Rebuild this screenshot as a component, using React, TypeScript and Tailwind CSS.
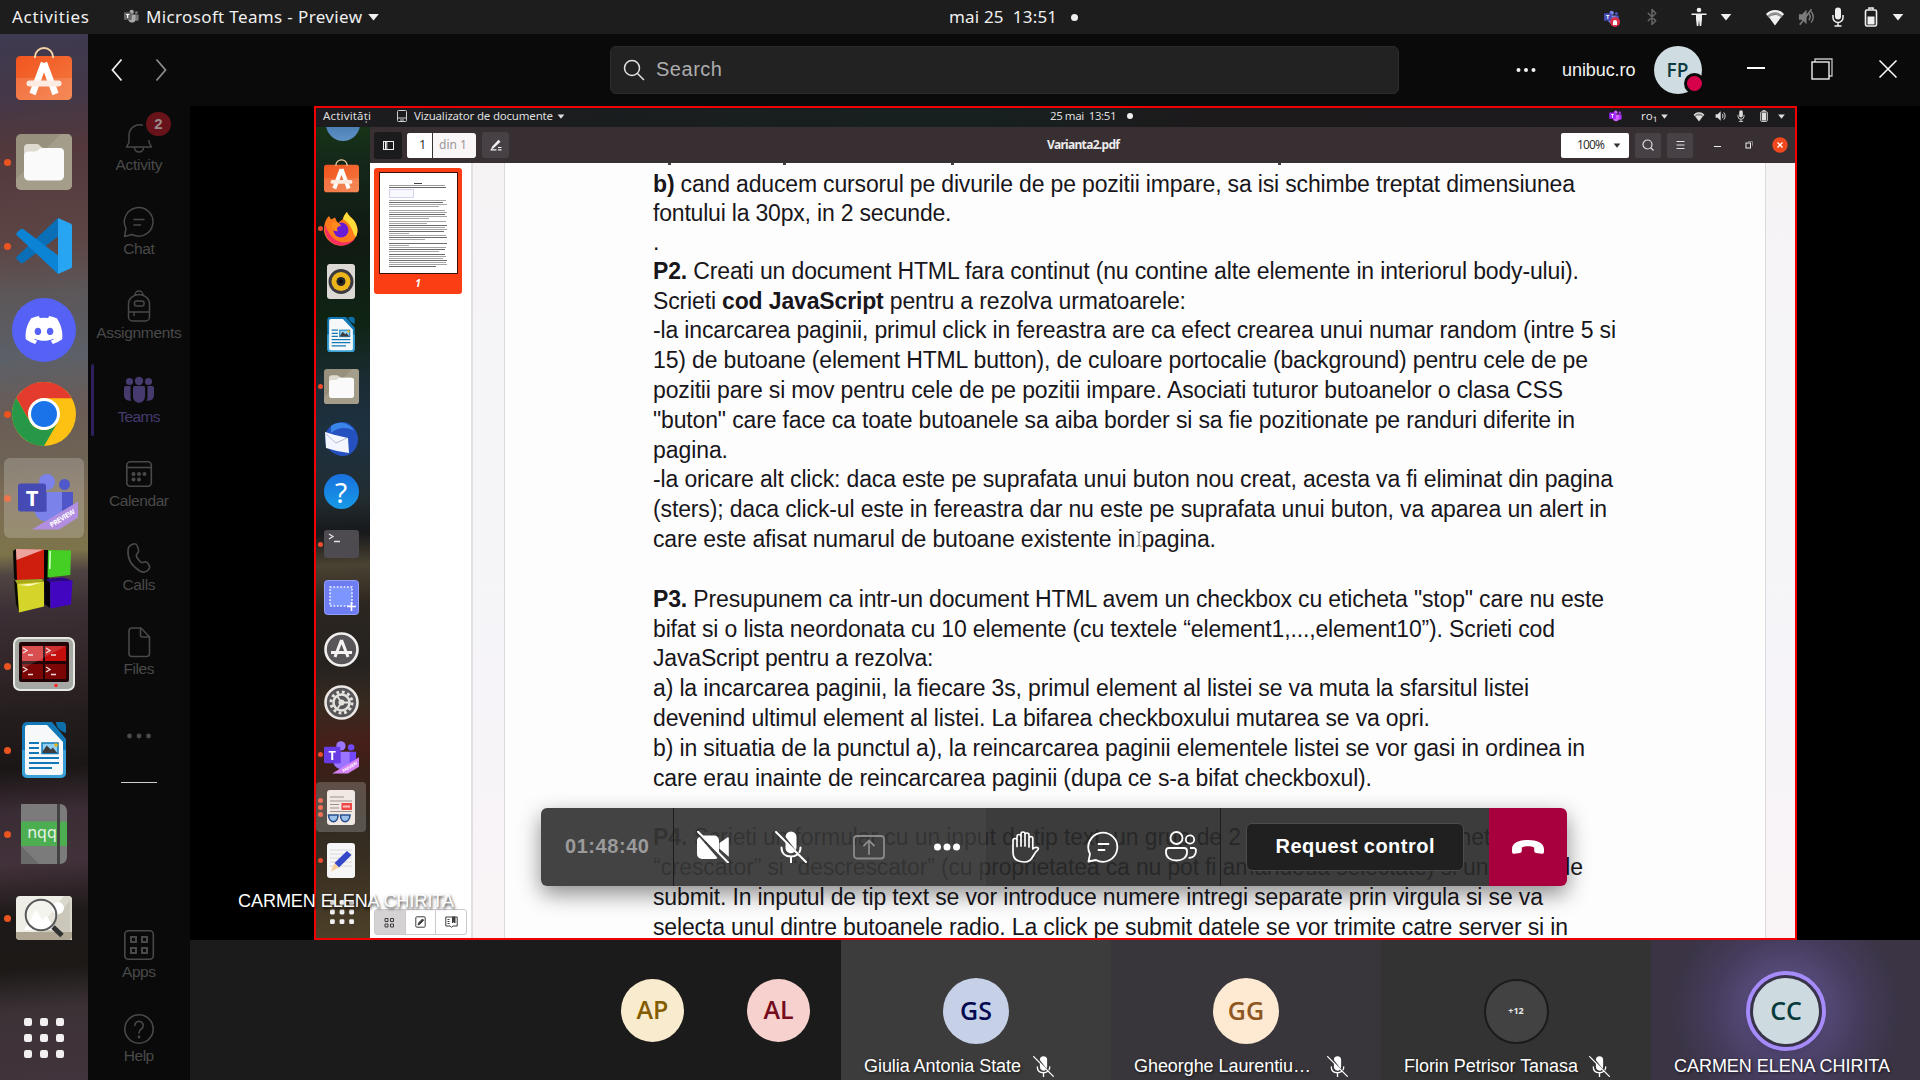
import { useLayoutEffect, useRef, useState } from "react";
import type { ReactNode } from "react";
import { FaDiscord } from "react-icons/fa6";
import { Bluetooth } from "lucide-react";

/* Text spread with letter spacing so that it fills exactly `w` pixels. */
function Fit({ w, className = "", children }: { w: number; className?: string; children: ReactNode }) {
  const ref = useRef<HTMLSpanElement>(null);
  const [ls, setLs] = useState(0);
  useLayoutEffect(() => {
    const el = ref.current;
    if (!el) return;
    const natural = el.getBoundingClientRect().width;
    const n = (el.textContent || "").length;
    setLs((w - natural) / Math.max(1, n - 1));
  }, [w]);
  return (
    <span className={`block shrink-0 whitespace-pre ${className}`} style={{ width: w }}>
      <span ref={ref} className="inline-block" style={{ letterSpacing: ls }}>
        {children}
      </span>
    </span>
  );
}

const Caret = ({ className = "" }: { className?: string }) => (
  <svg viewBox="0 0 14 9" className={`shrink-0 ${className}`} fill="currentColor">
    <path d="M1 1h12L7 8.5z" />
  </svg>
);

/* ---------- tray icons ---------- */
const Wifi = ({ className = "" }: { className?: string }) => (
  <svg viewBox="0 0 20 18" className={`shrink-0 ${className}`} fill="currentColor">
    <path d="M10 17.500 4 9.300C7.300 6.300 12.700 6.300 16 9.300z" />
    <path d="M1.800 6.800C6.500 1.800 13.500 1.800 18.200 6.800" fill="none" stroke="currentColor" strokeWidth="2.200" />
    <path d="M10 17.500 1.200 6.500C6 1 14 1 18.800 6.500L16 10C13 5.800 7 5.800 4 10z" opacity=".55" />
  </svg>
);
const MicSolid = ({ className = "" }: { className?: string }) => (
  <svg viewBox="0 0 20 20" className={`shrink-0 ${className}`} fill="none" stroke="currentColor" strokeWidth="1.500">
    <rect x="7" y="0.500" width="6" height="12" rx="3" fill="currentColor" stroke="none" />
    <path d="M5 8v2.500a5 5 0 0 0 10 0V8M10 15.500V19M6.500 19h7" />
  </svg>
);
const Battery = ({ className = "", level = 8 }: { className?: string; level?: number }) => (
  <svg viewBox="0 0 20 20" className={`shrink-0 ${className}`} fill="none" stroke="currentColor" strokeWidth="1.600">
    <path d="M8 2.500V1h4v1.500" />
    <rect x="4.500" y="3" width="11" height="16" rx="1.500" />
    <rect x="6.500" y={17.500 - level} width="7" height={level} fill="currentColor" stroke="none" />
  </svg>
);
const Volume = ({ className = "", muted = false }: { className?: string; muted?: boolean }) => (
  <svg viewBox="0 0 20 20" className={`shrink-0 ${className}`} fill="none" stroke="currentColor" strokeWidth="1.600">
    <path d="M1 7h3.500L9.500 2v16L4.500 13H1z" fill="currentColor" stroke="none" />
    <path d="M12 6.500c1.800 2 1.800 5 0 7M14.500 4c3.200 3.500 3.200 8.500 0 12" />
    {muted && <path d="M2 18.500 15 1.500" strokeWidth="1.800" />}
  </svg>
);

function TeamsLogo({ className = "", ribbon = false }: { className?: string; ribbon?: boolean }) {
  return (
    <svg viewBox="0 0 60 58" className={`shrink-0 ${className}`}>
      <circle cx="46.500" cy="12.500" r="5.500" fill="#5059c9" />
      <path d="M43 20h12v20a9 9 0 0 1-12 2z" fill="#4f57c8" />
      <circle cx="29" cy="10" r="8" fill="#7b83eb" />
      <path d="M16 20h28v17c0 17-27 17-28 0z" fill="#7b83eb" />
      <path d="M16 20h13v20H17z" fill="#5a61c8" />
      <rect x="0" y="11.500" width="28" height="28" rx="2.500" fill="#464ab4" />
      <text x="14" y="33.500" textAnchor="middle" fontFamily="Open Sans" fontWeight="700" fontSize="22" fill="#fff">T</text>
      {ribbon && (
        <g>
          <path d="M14 57.500 60 29.500V45.500L41 57.500z" fill="#b18ee0" />
          <text transform="translate(33.500 55.500) rotate(-31)" fontFamily="Open Sans" fontWeight="700" fontSize="7" textLength="28" fill="#fff">PREVIEW</text>
        </g>
      )}
    </svg>
  );
}

/* ---------- dock icons ---------- */
const SoftwareIcon = ({ className = "" }: { className?: string }) => (
  <svg viewBox="0 0 56 54" className={`shrink-0 ${className}`}>
    <defs>
      <linearGradient id="sw" x1="0" y1="0" x2="1" y2="1">
        <stop offset="0" stopColor="#f2551f" />
        <stop offset="1" stopColor="#f37a40" />
      </linearGradient>
    </defs>
    <rect x="0" y="9" width="56" height="44" rx="4.500" fill="url(#sw)" />
    <path d="M0 31h56v17.500a4.500 4.500 0 0 1-4.500 4.500h-47A4.500 4.500 0 0 1 0 48.500z" fill="#fff" opacity=".12" />
    <path d="M28 16 16.500 47M28 16l11.500 31" stroke="#fff" strokeWidth="6.500" />
    <path d="M13.500 36.500h29" stroke="#fdeae0" strokeWidth="6" strokeLinecap="round" />
    <path d="M19 11V10a9 9 0 0 1 18 0v1" fill="none" stroke="#f6d3a6" strokeWidth="2" />
  </svg>
);
const FilesIcon = ({ className = "" }: { className?: string }) => (
  <svg viewBox="0 0 56 56" className={`shrink-0 ${className}`}>
    <rect width="56" height="56" rx="5" fill="#96907c" />
    <path d="M0 45 45 0h6a5 5 0 0 1 5 5v46a5 5 0 0 1-5 5H5a5 5 0 0 1-5-5z" fill="#a39d8a" />
    <path d="M8 14a4 4 0 0 1 4-4h9c3 0 3.500 4 7 4h16a4 4 0 0 1 4 4v8H8z" fill="#dedad0" />
    <path d="M8 22a4.500 4.500 0 0 1 4.500-4.500H19c3 0 4-3.500 7-3.500h17.500A4.500 4.500 0 0 1 48 18.500V42a4.500 4.500 0 0 1-4.500 4.500h-31A4.500 4.500 0 0 1 8 42z" fill="#fafafa" />
  </svg>
);
const CodeIcon = () => (
  <svg viewBox="0 0 56 56" className="h-14 w-14">
    <path d="M42 0 1 38.500c-1 1-1 2 0 3l3.500 3.200c1 .8 2 .8 3 0L44 17z" fill="#0b6fb8" />
    <path d="M42 56 1 17.500c-1-1-1-2 0-3l3.500-3.200c1-.8 2-.8 3 0L44 39z" fill="#0c84d6" />
    <path d="M42 0 54.500 5.500c1 .5 1.500 1.300 1.500 2.300v40.400c0 1-.5 1.800-1.500 2.300L42 56z" fill="#27a4f2" />
  </svg>
);
const ChromeIcon = () => (
  <svg viewBox="0 0 64 64" className="h-16 w-16">
    <circle cx="32" cy="32" r="32" fill="#fdc113" />
    <path d="M4.300 16A32 32 0 0 1 59.700 16L60 16.300H32a16 16 0 0 0-13.900 23.700z" fill="#e33b2e" />
    <path d="M4.300 16A32 32 0 0 0 32 64l13.900-24A16 16 0 0 1 18.100 40z" fill="#279847" />
    <circle cx="32" cy="32" r="16" fill="#fff" />
    <circle cx="32" cy="32" r="13" fill="#1a73e8" />
  </svg>
);
const BlocksIcon = () => (
  <svg viewBox="0 0 60 66" className="-ml-0.5 h-[66px] w-[60px]">
    <path d="M0 2 3 0 6 31 3 32 1 29z" fill="#0a0606" />
    <path d="M31 1h5v30l-5 2z" fill="#050505" />
    <path d="M3 0 31 .5V29.500L4 31.500z" fill="#cf1d0e" />
    <path d="M3 0 31 .5 3.500 11z" fill="#fff" opacity=".6" />
    <path d="M35 1 58 1.500 57.300 26 34.500 28.500z" fill="#45cf25" />
    <path d="M36.500 2H38l-.5 18H36z" fill="#d8ffd0" />
    <path d="M1 31 5 34 6 63 3 55z" fill="#0a0a00" />
    <path d="M4 34 31 32.500V57.500L6 63.500z" fill="#d4d42a" />
    <path d="M2 31 29 30 31 32.500 4 35z" fill="#a8a81c" />
    <path d="M5 36 29 33.500 16 37z" fill="#fbfbc8" />
    <path d="M31 30 37 33V59l-5.500-4z" fill="#04000c" />
    <path d="M33 30 50 28.500 59.500 31.500 37 33z" fill="#2d0688" />
    <path d="M37 33 59.500 31.500 58 55.500 37.500 59.500z" fill="#4206c0" />
  </svg>
);
const TerminatorIcon = () => (
  <svg viewBox="0 0 62 54" className="-mt-1 h-[54px] w-[62px]">
    <rect x="1" y="1" width="60" height="52" rx="6" fill="#a5a8a3" stroke="#e8e8e4" strokeWidth="2" />
    <rect x="6" y="5" width="50" height="40" rx="2" fill="#220406" />
    {[0, 1].map((r) =>
      [0, 1].map((c) => (
        <g key={`${r}${c}`}>
          <rect x={9 + c * 23} y={9 + r * 18} width="21" height="15" fill={r ? "#7a0505" : c ? "#c40d0d" : "#d33232"} />
          <path d={r ? `M${10 + c * 23} 30l4 2.500-4 2.500M${15 + c * 23} 37.500h5` : `M${10 + c * 23} 11l4 2.500-4 2.500M${15 + c * 23} 18h5`} stroke="#f0dcdc" strokeWidth="1.300" fill="none" />
        </g>
      )),
    )}
    <path d="M9 9h44L9 32z" fill="#fff" opacity=".14" />
    <circle cx="43" cy="48.500" r="1.700" fill="#f22" />
  </svg>
);
const WriterIcon = ({ className = "" }: { className?: string }) => (
  <svg viewBox="0 0 44 56" className={`shrink-0 ${className}`}>
    <path d="M0 5a5 5 0 0 1 5-5h25l14 17v34a5 5 0 0 1-5 5H5a5 5 0 0 1-5-5z" fill="#1279b6" />
    <path d="M0 28h44v23a5 5 0 0 1-5 5H5a5 5 0 0 1-5-5z" fill="#3aa0d6" />
    <path d="M3 6a3 3 0 0 1 3-3h19l16 17v30a3 3 0 0 1-3 3H6a3 3 0 0 1-3-3z" fill="#f7f8f9" />
    <path d="M34 0h6a4 4 0 0 1 4 4v7C38 9 34 5 34 0z" fill="#0d6ea8" />
    <path d="M7 21h10M7 26h10M7 31h10M7 36h30M7 41h30M7 46h23" stroke="#1178b5" strokeWidth="2" />
    <rect x="20" y="21" width="16" height="10.500" fill="#8fd0f2" stroke="#1178b5" strokeWidth="1.500" />
    <path d="M20.800 31v-2l4-5.500 4 4 2-2 4.500 5.500z" fill="#3d3d3d" />
    <circle cx="34" cy="23" r="1.800" fill="#f4b400" />
  </svg>
);
const NqqIcon = () => (
  <svg viewBox="0 0 46 60" className="h-[60px] w-[46px]">
    <path d="M0 1a1 1 0 0 1 1-1h38a7 7 0 0 1 7 7v46a7 7 0 0 1-7 7H1a1 1 0 0 1-1-1z" fill="#7b7b7b" />
    <path d="M0 42 18 60H0z" fill="#6a6a6a" />
    <rect y="17.500" width="46" height="24.500" fill="#4cae50" />
    <rect x="36" width="3" height="60" fill="#424242" />
    <text x="21" y="34" textAnchor="middle" fontFamily="Noto Sans" fontSize="16" fill="#e8f4e8">nqq</text>
  </svg>
);
const ViewerIcon = () => (
  <svg viewBox="0 0 56 44" className="h-[44px] w-14">
    <rect width="56" height="44" rx="4" fill="#efeee6" />
    <path d="M14 44 48 0h4a4 4 0 0 1 4 4v40z" fill="#dad8cd" />
    <path d="M30 36 54 4v32z" fill="#c5c1b2" opacity=".7" />
    <path d="M0 36h56v4a4 4 0 0 1-4 4H4a4 4 0 0 1-4-4z" fill="#aea593" />
    <circle cx="42" cy="12" r="6" fill="#fff" />
    <path d="M8 34 20 14l6 10 5-4 8 14z" fill="#fff" />
    <circle cx="25" cy="19" r="15.300" fill="#fff" fillOpacity=".35" stroke="#56585a" strokeWidth="2" />
    <path d="m37 31 9 8.500" stroke="#2f3133" strokeWidth="5" />
  </svg>
);
const GridDots = ({ className = "" }: { className?: string }) => (
  <svg viewBox="0 0 40 40" className={`shrink-0 ${className}`} fill="#f2f0f0">
    {[0, 16, 32].map((y) => [0, 16, 32].map((x) => <rect key={`${x}-${y}`} x={x} y={y} width="8" height="8" rx="2.200" />))}
  </svg>
);

const dock: { icon: ReactNode; dot?: boolean; active?: boolean }[] = [
  { icon: <SoftwareIcon className="-mt-[9px] h-[54px] w-14" /> },
  { icon: <FilesIcon className="h-14 w-14" />, dot: true },
  { icon: <CodeIcon />, dot: true },
  {
    icon: (
      <div className="flex h-16 w-16 items-center justify-center rounded-full bg-[#5662f5]">
        <FaDiscord className="h-10 w-10 text-white" />
      </div>
    ),
  },
  { icon: <ChromeIcon />, dot: true },
  { icon: <TeamsLogo ribbon className="mt-[5px] ml-[7px] h-[58px] w-[60px]" />, dot: true, active: true },
  { icon: <BlocksIcon /> },
  { icon: <TerminatorIcon />, dot: true },
  { icon: <WriterIcon className="h-14 w-11" />, dot: true },
  { icon: <NqqIcon />, dot: true },
  { icon: <ViewerIcon />, dot: true },
];

function Dock() {
  return (
    <nav className="flex w-[88px] shrink-0 flex-col overflow-hidden bg-[linear-gradient(176deg,#3e3a50_0%,#443848_6%,#52383c_11%,#5e4544_20%,#5c5759_25%,#5c6068_31%,#6a5c56_36%,#6e6455_41%,#7c6c56_44%,#7d744a_49.5%,#4f4442_51.500%,#3c2f35_55%,#322629_60%,#241d1e_65%,#1b1616_70%,#3a2c34_74%,#42313a_79%,#1d1918_84%,#1c1917_89%,#3c3236_93%,#41343c_100%)]">
      <div className="flex flex-col pt-[2px]">
        {dock.map((d, i) => (
          <div key={i} className="flex h-[84px] items-center">
            <span className={`ml-1 h-[7px] w-[7px] shrink-0 rounded-full ${d.dot ? "bg-[#e95420]" : ""}`} />
            <div className={`-ml-[7px] flex h-20 w-20 items-center justify-center rounded-md ${d.active ? "bg-white/20" : ""}`}>{d.icon}</div>
          </div>
        ))}
      </div>
      <GridDots className="mt-[58px] ml-6 h-10 w-10" />
    </nav>
  );
}

/* ---------- Teams rail ---------- */
const rs = "h-[34px] w-[34px] shrink-0";
const rail: { label: string; w: number; active?: boolean; icon: ReactNode }[] = [
  {
    label: "Activity", w: 47,
    icon: (
      <svg viewBox="0 0 34 34" className={rs} fill="none" stroke="currentColor" strokeWidth="1.500" strokeLinejoin="round">
        <path d="M21 4.300A10.500 10.500 0 0 0 7 14v7.500L4.500 26h25L27 21.500V19" />
        <path d="M12.500 26.500a4.500 4.500 0 0 0 9 0" />
      </svg>
    ),
  },
  {
    label: "Chat", w: 31.5,
    icon: (
      <svg viewBox="0 0 34 34" className={rs} fill="none" stroke="currentColor" strokeWidth="1.500" strokeLinejoin="round" strokeLinecap="round">
        <path d="M2.500 31.500 4 23.500a14.300 14.300 0 1 1 6 6zM12 14.500h10M12 20h6.500" />
      </svg>
    ),
  },
  {
    label: "Assignments", w: 85.5,
    icon: (
      <svg viewBox="0 0 34 34" className={rs} fill="none" stroke="currentColor" strokeWidth="1.500">
        <path d="M13 6a4 4 0 0 1 8 0M6.500 15a10.500 9.500 0 0 1 21 0v13a4 4 0 0 1-4 4h-13a4 4 0 0 1-4-4z" />
        <rect x="12.500" y="12" width="9.500" height="5" rx="2" />
        <path d="M6.500 23h21M12 23v4" />
      </svg>
    ),
  },
  {
    label: "Teams", w: 43, active: true,
    icon: (
      <svg viewBox="0 0 34 34" className={rs} fill="currentColor">
        <circle cx="17" cy="8" r="4.200" />
        <circle cx="7.500" cy="8.500" r="3.600" />
        <circle cx="26.500" cy="8.500" r="3.600" />
        <path d="M11 14.500a1.500 1.500 0 0 1 1.500-1.500h9a1.500 1.500 0 0 1 1.500 1.500V23c0 9-12 9-12 0zM4 13h4.500v11.500c0 1.500.5 2 1 3C5 28.500 2 26 2 22v-7a2 2 0 0 1 2-2zM30 13h-4.500v11.500c0 1.500-.5 2-1 3C29 28.500 32 26 32 22v-7a2 2 0 0 0-2-2z" />
      </svg>
    ),
  },
  {
    label: "Calendar", w: 60,
    icon: (
      <svg viewBox="0 0 34 34" className={rs} fill="none" stroke="currentColor" strokeWidth="1.600">
        <rect x="4.800" y="4.800" width="24.500" height="24.500" rx="3.500" />
        <path d="M5 10.500h24" />
        <g fill="currentColor" stroke="none">
          <circle cx="11.500" cy="17" r="2" /><circle cx="17" cy="17" r="2" /><circle cx="22.500" cy="17" r="2" />
          <circle cx="11.500" cy="22.500" r="2" /><circle cx="17" cy="22.500" r="2" />
        </g>
      </svg>
    ),
  },
  {
    label: "Calls", w: 33,
    icon: (
      <svg viewBox="0 0 34 34" className={rs} fill="none" stroke="currentColor" strokeWidth="1.600" strokeLinejoin="round">
        <path d="M9 4 11.500 3c2-.8 3 0 4 2.500l1 3c.7 2 0 3-1.500 4.500-1 1-1 1.800 0 3.500s2.500 3.800 4 4.800c1 .6 2 .3 3.500-.3 1.500-.6 2.500 0 3.500 1.500l1.200 2c1 1.700.6 2.800-.8 4.200-2 2.300-5 3.200-8.500 1.300C9.500 25 5.500 18 6 9.500 6.200 6.500 7 4.900 9 4z" />
      </svg>
    ),
  },
  {
    label: "Files", w: 31,
    icon: (
      <svg viewBox="0 0 34 34" className={rs} fill="none" stroke="currentColor" strokeWidth="1.600" strokeLinejoin="round">
        <path d="M10 3h9l8.500 9v16.500a3 3 0 0 1-3 3H10a3 3 0 0 1-3-3V6a3 3 0 0 1 3-3z" />
        <path d="M18.500 3v7a2 2 0 0 0 2 2h7" />
      </svg>
    ),
  },
];

function RailItem({ label, w, active, icon, badge }: { label: string; w: number; active?: boolean; icon: ReactNode; badge?: boolean }) {
  return (
    <div className={`relative flex h-[84px] w-full shrink-0 flex-col items-center pt-[9px] ${active ? "text-[#463a6e]" : "text-[#494949]"}`}>
      {active && <span className="absolute top-0 left-[3px] h-[72px] w-[3px] rounded-sm bg-[#2f1f5c]" />}
      {icon}
      <Fit w={w} className="text-[15.500px] leading-[20px]">{label}</Fit>
      {badge && (
        <span className="absolute top-0 left-[58px] flex h-6 w-[25px] items-center justify-center rounded-full bg-[#681319] text-[15px] font-bold text-[#9a8a8c]">2</span>
      )}
    </div>
  );
}

function Rail() {
  return (
    <aside className="flex w-[102px] shrink-0 flex-col items-center overflow-hidden bg-[#0a0a0a] pt-[6px]">
      {rail.map((r, i) => (
        <RailItem key={r.label} {...r} badge={i === 0} />
      ))}
      <svg viewBox="0 0 24 6" className="mt-[33px] h-[6px] w-6 shrink-0" fill="#4a4a4a">
        <circle cx="2.500" cy="3" r="2.400" /><circle cx="12" cy="3" r="2.400" /><circle cx="21.500" cy="3" r="2.400" />
      </svg>
      <div className="mt-[43px] h-px w-9 shrink-0 bg-[#cfcfcf]" />
      <div className="mt-[136px] flex w-full shrink-0 flex-col">
        <RailItem
          label="Apps" w={34}
          icon={
            <svg viewBox="0 0 34 34" className={rs} fill="none" stroke="currentColor" strokeWidth="1.600">
              <rect x="2.800" y="2.800" width="28.500" height="28.500" rx="3.500" />
              <g strokeWidth="2"><rect x="9" y="9" width="5" height="5" /><rect x="20" y="9" width="5" height="5" /><rect x="9" y="20" width="5" height="5" /><rect x="20" y="20" width="5" height="5" /></g>
            </svg>
          }
        />
        <RailItem
          label="Help" w={30.5}
          icon={
            <svg viewBox="0 0 34 34" className={rs} fill="none" stroke="currentColor" strokeWidth="1.600" strokeLinecap="round">
              <circle cx="17" cy="17" r="14.200" />
              <path d="M12.800 13.500a4.200 4.200 0 1 1 6.500 3.500c-1.700 1.200-2.300 2-2.300 4" />
              <circle cx="17" cy="25" r=".6" fill="currentColor" />
            </svg>
          }
        />
      </div>
    </aside>
  );
}

/* ---------- bars ---------- */
function SystemBar() {
  return (
    <header className="flex h-[34px] shrink-0 items-center bg-[#1d1d1d] font-['Noto_Sans'] text-[17px] text-[#f0f0f0]">
      <Fit w={77} className="ml-3">Activities</Fit>
      <TeamsLogo className="ml-[35px] h-4 w-4 brightness-125 grayscale" />
      <Fit w={216} className="ml-[6px]">Microsoft Teams - Preview</Fit>
      <Caret className="ml-[5px] h-2 w-[13px]" />
      <Fit w={108} className="ml-[569px]">{"mai 25  13:51"}</Fit>
      <span className="ml-[14px] h-[7px] w-[7px] rounded-full bg-[#f0f0f0]" />
      <div className="ml-auto flex items-center pr-[15px]">
        <div className="relative flex h-5 w-5 items-center pt-0.5">
          <TeamsLogo className="ml-0.5 h-4 w-4" />
          <span className="absolute right-0.5 bottom-0 flex h-2.5 w-2.5 items-center justify-center rounded-full bg-[#d33048]">
            <span className="h-[5px] w-1 rounded-t-full bg-white" />
          </span>
        </div>
        <Bluetooth className="ml-5 h-[18px] w-5 text-[#666]" strokeWidth={2} />
        <svg viewBox="0 0 20 20" className="ml-[27px] h-5 w-5" fill="currentColor">
          <circle cx="10" cy="3" r="2.300" />
          <path d="M2.500 6.500h15v1.600H13V12l-.8 7H10.700L10 13l-.7 6H7.800L7 12V8.100H2.500z" />
        </svg>
        <Caret className="ml-[10px] h-2 w-[14px]" />
        <Wifi className="ml-8 h-[18px] w-5" />
        <Volume muted className="ml-3 h-[18px] w-5 text-[#7c7c7c]" />
        <MicSolid className="ml-[11px] h-5 w-5" />
        <Battery className="ml-[13px] h-5 w-5" />
        <Caret className="ml-[10px] h-2 w-[14px]" />
      </div>
    </header>
  );
}

function TitleBar() {
  return (
    <div className="flex h-[72px] shrink-0 items-center bg-[#0a0a0a] text-[#f2f2f2]">
      <svg viewBox="0 0 12 24" className="ml-[23px] h-6 w-3" fill="none" stroke="#eee" strokeWidth="1.800"><path d="M10.500 1.500 1.500 12l9 10.500" /></svg>
      <svg viewBox="0 0 12 24" className="ml-8 h-6 w-3" fill="none" stroke="#8a8a8a" strokeWidth="1.800"><path d="M1.500 1.500l9 10.500-9 10.500" /></svg>
      <div className="ml-[443px] flex h-12 w-[789px] items-center rounded-md border border-[#2d2d2d] bg-[#222]">
        <svg viewBox="0 0 22 22" className="ml-3 h-[22px] w-[22px]" fill="none" stroke="#e2e2e2" strokeWidth="1.500"><circle cx="9" cy="9" r="7.500" /><path d="m14.500 14.500 6.500 6.500" /></svg>
        <Fit w={66} className="ml-[11px] pb-[3px] text-[20px] leading-6 text-[#adadad]">Search</Fit>
      </div>
      <svg viewBox="0 0 20 6" className="ml-[117px] h-[6px] w-5" fill="currentColor"><circle cx="2.500" cy="3" r="2" /><circle cx="10" cy="3" r="2" /><circle cx="17.500" cy="3" r="2" /></svg>
      <Fit w={73.5} className="ml-[26px] text-[18px]">unibuc.ro</Fit>
      <div className="relative ml-[18px] flex h-12 w-12 items-center justify-center rounded-full bg-[#cfdde2] font-['Open_Sans'] text-[19px] font-semibold text-[#0c3a40]">
        FP
        <span className="absolute right-[-3px] bottom-0 h-[21px] w-[21px] rounded-full border-[3px] border-[#0a0a0a] bg-[#d6004a]" />
      </div>
      <span className="mb-1 ml-[45px] h-[1.500px] w-[18px] bg-white" />
      <svg viewBox="0 0 22 22" className="mb-0.5 ml-[46px] h-[22px] w-[22px]" fill="none" stroke="#fff" strokeWidth="1.300"><rect x="1" y="4" width="17" height="17" /><path d="M4 4V1h17v17h-3" opacity=".75" /></svg>
      <svg viewBox="0 0 18 18" className="mb-0.5 ml-[46px] h-[18px] w-[18px]" stroke="#fff" strokeWidth="1.500"><path d="m.5.5 17 17M17.500.5l-17 17" /></svg>
    </div>
  );
}

/* ---------- shared screen ---------- */
const miniDock: { icon: ReactNode; dots?: number; active?: boolean }[] = [
  { icon: <SoftwareIcon className="-mt-px h-[34px] w-[35px]" /> },
  {
    dots: 1,
    icon: (
      <svg viewBox="0 0 36 36" className="h-9 w-9">
        <path d="M1 20C1 12 3 8 6 5l2 3.500 4-2C13 9 14 11 15 12l5-4c1-4 3-6 4-7 1 4 5 5 8 10 2 4 3 6 2.500 10A17 17 0 0 1 1 20z" fill="#ff7a1a" />
        <path d="M20 8c1-4 3-6 4-7 1 4 5 5 8 10 3 6 3 10 1 15-3-2-3-12-13-18z" fill="#ffdc3a" />
        <path d="M2 14a17 17 0 0 0 30 14C20 36 8 30 2 14z" fill="#f5216e" opacity=".85" />
        <circle cx="18" cy="19" r="7.500" fill="#6a1bd6" />
        <path d="M9 12c5-2 8 0 9 3-4 0-5 3-3 5-4 1-8-3-6-8z" fill="#ff8a1a" />
      </svg>
    ),
  },
  {
    icon: (
      <svg viewBox="0 0 28 35" className="h-[35px] w-7">
        <rect width="28" height="35" rx="3" fill="#dcd9d4" />
        <circle cx="14" cy="17.500" r="12.500" fill="#3c3a40" /><circle cx="14" cy="17.500" r="9.500" fill="#edb51a" />
        <circle cx="14" cy="17.500" r="4.500" fill="#26252a" /><circle cx="14" cy="17.500" r="2" fill="#0a0a0a" />
      </svg>
    ),
  },
  { icon: <WriterIcon className="h-[35px] w-7" /> },
  { icon: <FilesIcon className="h-[35px] w-[35px]" />, dots: 1 },
  {
    icon: (
      <svg viewBox="0 0 36 36" className="h-9 w-9">
        <path d="M18 1C26 0 35 8 35 18S28 35 20 35 2 28 2 18 8 3 18 1z" fill="#2450c0" />
        <path d="M8 5C16-1 27 2 31 10 24 5 14 7 8 12z" fill="#3a86e8" />
        <path d="M2 11 12 14l13 3 1 15L14 30 3 27z" fill="#f4f6ff" />
        <path d="m3 13 10 9 11-5" fill="none" stroke="#b4bcd4" />
      </svg>
    ),
  },
  {
    icon: (
      <div className="flex h-[35px] w-[35px] items-center justify-center rounded-full bg-gradient-to-b from-[#1a70de] to-[#189ae6] font-['Noto_Sans'] text-[28px] text-white">?</div>
    ),
  },
  {
    dots: 1,
    icon: (
      <svg viewBox="0 0 35 28" className="h-7 w-[35px]">
        <rect width="35" height="28" rx="3" fill="#4d4a50" /><path d="m5 4 4 2.500L5 9M10 11.500h6" fill="none" stroke="#e4e4e4" strokeWidth="1.300" />
      </svg>
    ),
  },
  {
    icon: (
      <svg viewBox="0 0 35 35" className="h-[35px] w-[35px]">
        <rect x=".5" y=".5" width="34" height="34" rx="3" fill="#6f7df2" stroke="#93a0ff" />
        <rect x="6" y="7" width="22" height="19" fill="#7d95ff" stroke="#eef2ff" strokeWidth="1.600" strokeDasharray="1.700 1.700" />
        <path d="M27.500 22v9M23 26.500h9" stroke="#fff" strokeWidth="1.600" />
      </svg>
    ),
  },
  {
    icon: (
      <svg viewBox="0 0 35 35" className="h-[35px] w-[35px]">
        <circle cx="17.500" cy="17.500" r="16" fill="#59565a" stroke="#f2efef" strokeWidth="2.600" />
        <path d="M17.500 8 11 25M17.500 8 24 25M7 20.500h21" stroke="#f5f3f3" strokeWidth="3" fill="none" />
      </svg>
    ),
  },
  {
    icon: (
      <svg viewBox="0 0 35 35" className="h-[35px] w-[35px]">
        <circle cx="17.500" cy="17.500" r="16" fill="#59565a" stroke="#ebe8e6" strokeWidth="2.600" />
        <circle cx="17.500" cy="17.500" r="10.500" fill="none" stroke="#e5e2de" strokeWidth="3" strokeDasharray="2.800 2.700" />
        <circle cx="17.500" cy="17.500" r="8" fill="none" stroke="#e5e2de" strokeWidth="2.500" />
        <circle cx="17.500" cy="17.500" r="3" fill="#e5e2de" />
        <path d="M17.500 17.500h7M17.500 17.500l-4-6M17.500 17.500l-4 6" stroke="#e5e2de" strokeWidth="1.800" />
      </svg>
    ),
  },
  { icon: <TeamsLogo ribbon className="mt-1 ml-px h-[34px] w-[35px] hue-rotate-15 saturate-150" />, dots: 1 },
  {
    dots: 3, active: true,
    icon: (
      <svg viewBox="0 0 28 35" className="h-[35px] w-7">
        <rect width="28" height="35" rx="3" fill="#f1e8e4" />
        <path d="M3 7h14M3 11h22M3 14.500h9M3 18h9M3 21.500h22" stroke="#9c928e" strokeWidth="1.200" />
        <rect x="14.500" y="13" width="10.500" height="7" fill="#f04646" /><path d="M16 16.500h7" stroke="#ffc8c8" strokeWidth="2" />
        <path d="M1.500 25h9.500c0 9-9 9-9.500 0zM13.500 25H23c-.5 9-9.500 9-9.500 0z" fill="#9cc0ea" stroke="#274f8c" strokeWidth="1.600" />
      </svg>
    ),
  },
  {
    dots: 1,
    icon: (
      <svg viewBox="0 0 28 35" className="h-[35px] w-7">
        <rect width="28" height="35" rx="3" fill="#f7f6f6" />
        <path d="M3 7h22M3 11h22M3 15h22M3 19h22M3 23h22" stroke="#d8d8dc" />
        <path d="M20 8 24.500 12 12 24.500 7.500 20z" fill="#3347c8" /><path d="M7.500 20 12 24.500 4 28.500z" fill="#f3cf9c" />
      </svg>
    ),
  },
];

function MiniDock() {
  return (
    <div className="flex w-[54px] shrink-0 flex-col overflow-hidden bg-[linear-gradient(178deg,#173417_0%,#14261a_5%,#101a12_14%,#0f2413_24%,#1c2c36_32%,#1d3140_38%,#222c30_46%,#17181b_50%,#4a4232_54%,#2c2620_59%,#252220_66%,#372a20_71%,#461f19_76%,#3a2018_79%,#2f2a21_86%,#3a3022_91%,#4c4028_100%)]">
      <div className="flex h-[14px] justify-center overflow-hidden">
        <span className="-mt-[20px] h-[34px] w-[34px] shrink-0 rounded-full bg-gradient-to-b from-[#35659c] to-[#5f93c6]" />
      </div>
      <div className="mt-[9px] flex flex-col">
        {miniDock.map((d, i) => (
          <div key={i} className="flex h-[52.600px] items-center">
            <div className="flex w-[7px] shrink-0 flex-col items-center gap-[2px] pl-px">
              {Array.from({ length: d.dots || 0 }).map((_, k) => (
                <span key={k} className="h-[5px] w-[5px] rounded-full bg-[#ee4c2e]" />
              ))}
            </div>
            <div className={`-ml-[7px] flex h-[50px] w-[50px] items-center justify-center rounded ${d.active ? "bg-white/20" : ""}`}>{d.icon}</div>
          </div>
        ))}
      </div>
      <GridDots className="mt-[14px] ml-[14px] h-[24px] w-[24px]" />
    </div>
  );
}

const B = ({ children }: { children: ReactNode }) => <strong className="font-bold">{children}</strong>;

/* Each line: content and its drawn width. */
const head: [ReactNode, number][] = [
  [<><B>b)</B>{" cand aducem cursorul pe divurile de pe pozitii impare, sa isi schimbe treptat dimensiunea"}</>, 922],
  ["fontului la 30px, in 2 secunde.", 298.5],
  [".", 6],
];
const body: [ReactNode, number][] = [
  [<><B>P2.</B>{" Creati un document HTML fara continut (nu contine alte elemente in interiorul body-ului)."}</>, 926],
  [<>{"Scrieti "}<B>cod JavaScript</B>{" pentru a rezolva urmatoarele:"}</>, 533],
  ["-la incarcarea paginii, primul click in fereastra are ca efect crearea unui numar random (intre 5 si", 963],
  ["15) de butoane (element HTML button), de culoare portocalie (background) pentru cele de pe", 935],
  ["pozitii pare si mov pentru cele de pe pozitii impare. Asociati tuturor butoanelor o clasa CSS", 910],
  ["\"buton\" care face ca toate butoanele sa aiba border si sa fie pozitionate pe randuri diferite in", 922],
  ["pagina.", 75],
  ["-la oricare alt click: daca este pe suprafata unui buton nou creat, acesta va fi eliminat din pagina", 960],
  ["(sters); daca click-ul este in fereastra dar nu este pe suprafata unui buton, va aparea un alert in", 954],
  ["care este afisat numarul de butoane existente in pagina.", 563],
  [" ", 6],
  [<><B>P3.</B>{" Presupunem ca intr-un document HTML avem un checkbox cu eticheta \"stop\" care nu este"}</>, 951],
  ["bifat si o lista neordonata cu 10 elemente (cu textele “element1,...,element10”). Scrieti cod", 902],
  ["JavaScript pentru a rezolva:", 280.5],
  ["a) la incarcarea paginii, la fiecare 3s, primul element al listei se va muta la sfarsitul listei", 876],
  ["devenind ultimul element al listei. La bifarea checkboxului mutarea se va opri.", 777],
  ["b) in situatia de la punctul a), la reincarcarea paginii elementele listei se vor gasi in ordinea in", 932],
  ["care erau inainte de reincarcarea paginii (dupa ce s-a bifat checkboxul).", 719],
  [" ", 6],
  [<><B>P4.</B>{" Scrieti un formular cu un input de tip text, un grup de 2 butoane radio cu etichete"}</>, 850],
  ["“crescator” si “descrescator” (cu proprietatea ca nu pot fi amandoua selectate) si un buton de", 930],
  ["submit. In inputul de tip text se vor introduce numere intregi separate prin virgula si se va", 890],
  ["selecta unul dintre butoanele radio. La click pe submit datele se vor trimite catre server si in", 915],
];

function Page() {
  return (
    <div className="relative h-full flex-1 overflow-hidden border-x border-[#dcd9dc] bg-[#fefdfe] pt-[7px] pl-[148px] text-[23px] text-[#18161a]">
      {[163, 278, 446, 773].map((x) => (
        <span key={x} className="absolute top-0 h-[2px] w-[3px] bg-[#444]" style={{ left: x }} />
      ))}
      {head.map(([t, w], i) => (
        <Fit key={i} w={w} className="h-[28.900px] leading-[29px]">{t}</Fit>
      ))}
      {body.map(([t, w], i) => (
        <Fit key={i} w={w} className="h-[29.830px] leading-[29px]">{t}</Fit>
      ))}
      <svg viewBox="0 0 6 16" className="absolute top-[368px] left-[631px] h-4 w-[6px]" fill="none" stroke="#444" strokeWidth=".8"><path d="M.5.5 3 1.500 5.500.5M3 1.500v13M.5 15.500 3 14.500l2.500 1" /></svg>
    </div>
  );
}

/* Widths of the miniature page's text rows; 0 is a paragraph gap. */
const thumbRows = [0, 57, 54, 58, 50, 0, 56, 58, 56, 58, 40, 0, 57, 38, 58, 56, 58, 55, 20, 57, 58, 36, 0, 58, 20, 57, 56, 50, 0, 56, 57, 54, 58, 57, 58, 47];

function Thumbnail() {
  return (
    <div className="mt-[5px] ml-1 flex h-[126px] w-[88px] flex-col items-center rounded-[3px] bg-[#fb3e14] pt-1">
      <div className="flex h-[102px] w-[79px] flex-col border border-[#3a0d05] bg-white px-[9px] pt-[10px]">
        <span className="ml-[25px] h-px w-2 bg-[#444]" />
        <span className="mt-px h-px w-[56px] bg-[#999]" />
        <span className="mt-px h-px w-[57px] bg-[#666]" />
        <span className="mt-px mb-0.5 h-[9px] w-[25px] border border-[#d4d4ee] bg-[#f8f8ff]" />
        {thumbRows.slice(1).map((w, k) =>
          w ? (
            <span key={k} className={`mb-px h-px ${k % 3 === 1 ? "bg-[#6c6c6c]" : "bg-[#a4a4a4]"}`} style={{ width: w }} />
          ) : (
            <span key={k} className="h-[1.500px]" />
          ),
        )}
      </div>
      <span className="font-['Noto_Sans'] text-[10px] leading-[18px] font-bold text-white italic">1</span>
    </div>
  );
}

function SharedScreen() {
  return (
    <div className="flex h-full w-[1483px] flex-col border-2 border-[#f00000] bg-[#1c1a1d] font-['Noto_Sans']">
      <div className="flex h-[19px] shrink-0 items-center bg-[linear-gradient(90deg,#1d1b1f,#17201f_45%,#1d1a1c_60%,#1b1a1c)] pb-[3px] text-[11.500px] leading-none text-[#dedede]">
        <Fit w={48} className="ml-[7px]">Activități</Fit>
        <svg viewBox="0 0 10 12" className="ml-[26px] h-3 w-[10px]" fill="none" stroke="#cfcfcf"><rect x=".5" y=".5" width="9" height="11" rx="1" /><path d="M1 8h8M3 10h4" /></svg>
        <Fit w={139} className="ml-[7px]">Vizualizator de documente</Fit>
        <Caret className="ml-[4px] h-[5px] w-2" />
        <Fit w={66.5} className="ml-[485px]">{"25 mai  13:51"}</Fit>
        <span className="ml-[10px] h-[6px] w-[6px] rounded-full bg-[#f0f0f0]" />
        <div className="ml-auto flex items-center pr-[9px]">
          <TeamsLogo className="h-[13px] w-[14px] hue-rotate-30 saturate-200" />
          <Fit w={16} className="ml-[18px]">ro₁</Fit>
          <Caret className="ml-[3px] h-[5px] w-[9px]" />
          <Wifi className="ml-[24px] h-[11px] w-3" />
          <Volume className="ml-[10px] h-3 w-3" />
          <MicSolid className="ml-2 h-3 w-3" />
          <Battery level={13} className="ml-[11px] h-3 w-3" />
          <Caret className="ml-[7px] h-[5px] w-[9px]" />
        </div>
      </div>
      <div className="flex min-h-0 flex-1">
        <MiniDock />
        <div className="flex min-w-0 flex-1 flex-col">
          <div className="flex h-[36px] shrink-0 items-center bg-[#372f32] text-[12px] leading-none text-[#ececec]">
            <div className="ml-1 flex h-[27px] w-7 items-center justify-center rounded-[3px] bg-[#1b1a1c]">
              <svg viewBox="0 0 11 9" className="h-[9px] w-[11px]" fill="none" stroke="#f0f0f0"><rect x=".5" y=".5" width="10" height="8" /><path d="M2.500 1v7M3.800 1v7" /></svg>
            </div>
            <div className="ml-[5px] flex h-[25px] w-[69px] overflow-hidden rounded-[3px] bg-[#faf6f7]">
              <span className="flex w-[26px] items-center justify-end border-r border-[#333] bg-white pr-[6px] text-[#333]">1</span>
              <span className="flex items-center pl-[6px] text-[#9a9697]">din 1</span>
            </div>
            <div className="ml-[6px] flex h-[26px] w-[27px] items-center justify-center rounded-[3px] bg-[#474145]">
              <svg viewBox="0 0 12 12" className="h-3 w-3" fill="#f0f0f0"><path d="M8.500.8 10.500 2.800 3.500 9.200 1 10.800l1-3zM.5 10.300h6v1.200h-6zM8 8h3.500v1H8zM8 10.300h3.500v1.200H8z" /></svg>
            </div>
            <Fit w={73} className="ml-[538px] pb-px font-bold">Varianta2.pdf</Fit>
            <div className="ml-auto flex items-center pr-[7px]">
              <div className="flex h-[25px] w-[68px] items-center rounded-[2px] bg-white text-[#333]">
                <Fit w={28} className="ml-[16px]">100%</Fit>
                <Caret className="ml-[8px] h-[5px] w-[8px]" />
              </div>
              <div className="ml-[6px] flex h-[25px] w-[26px] items-center justify-center rounded-[2px] bg-[#474145]">
                <svg viewBox="0 0 12 12" className="h-3 w-3" fill="none" stroke="#e0e0e0" strokeWidth="1.200"><circle cx="5.500" cy="5.500" r="4.500" /><path d="m8.500 8.500 3 3" /></svg>
              </div>
              <div className="ml-[6px] flex h-[25px] w-[26px] items-center justify-center rounded-[2px] bg-[#474145]">
                <svg viewBox="0 0 9 10" className="h-[10px] w-[9px]" stroke="#e0e0e0"><path d="M.5 1.500h8M.5 5h8M.5 8.500h8" /></svg>
              </div>
              <span className="mt-[3px] ml-[21px] h-px w-[7px] bg-[#eee]" />
              <svg viewBox="0 0 8 8" className="ml-[24px] h-2 w-2" fill="none" stroke="#eee"><rect x="1" y="2" width="4.500" height="5" /><path d="M3 .5h4.500V5" opacity=".4" /></svg>
              <svg viewBox="0 0 16 16" className="ml-[19px] h-4 w-4"><circle cx="8" cy="8" r="7.700" fill="#f0481e" /><path d="m5.500 5.500 5 5M10.500 5.500l-5 5" stroke="#fff" strokeWidth="1.300" /></svg>
            </div>
          </div>
          <div className="flex min-h-0 flex-1 bg-[#f6f4f7]">
            <div className="flex w-[103px] shrink-0 flex-col border-r-2 border-[#e3e0e3] bg-white">
              <Thumbnail />
              <div className="mt-auto mb-[3px] ml-1 flex h-[26px] w-[93px] rounded-[3px] border border-[#cdc9cb] text-[#3c3c3c]">
                <span className="flex flex-1 items-center justify-center border-r border-[#cdc9cb] bg-[#d5d2d4]">
                  <svg viewBox="0 0 11 11" className="h-[11px] w-[11px]" fill="none" stroke="currentColor"><path d="M1 1.500h3v3H1zM6.500 1.500h3v3h-3zM1 7h3v3H1zM6.500 7h3v3h-3z" /></svg>
                </span>
                <span className="flex flex-1 items-center justify-center border-r border-[#cdc9cb]">
                  <svg viewBox="0 0 11 12" className="h-3 w-[11px]" fill="none" stroke="currentColor"><rect x=".8" y=".8" width="9.400" height="10.400" rx="1" /><path d="m3 9 1-2.500 3.500-3.500 1.200 1.200L5 8z" fill="currentColor" /></svg>
                </span>
                <span className="flex flex-1 items-center justify-center">
                  <svg viewBox="0 0 13 12" className="h-3 w-[13px]" fill="none" stroke="currentColor"><path d="M.8 1h11.400v9H8L6.500 11.300 5 10H.8zM2.500 3.500h2M2.500 5.500h2M2.500 7.500h2" /><path d="M7.500 1h2.500v6L8.700 5.500 7.500 7z" fill="currentColor" /></svg>
                </span>
              </div>
            </div>
            <div className="flex flex-1 bg-[linear-gradient(180deg,#f6f3f5,#f5f5f8_40%,#f6f4f8_70%,#faf4f6)] pr-[29px] pl-[31px] font-['Liberation_Sans']">
              <Page />
            </div>
          </div>
        </div>
      </div>
    </div>
  );
}

/* ---------- meeting controls ---------- */
const MicOff = ({ className = "" }: { className?: string }) => (
  <svg viewBox="0 0 32 32" className={`shrink-0 ${className}`} fill="none" stroke="#fff" strokeWidth="2" strokeLinecap="round">
    <path d="M10.500 6a5.500 5.500 0 0 1 11 0v10c0 1.500-.5 2.500-1 3z" fill="#fff" stroke="none" />
    <path d="M10.500 10.500 20 20.500a5.500 5.500 0 0 1-9.500-4z" fill="#fff" stroke="none" />
    <path d="M6.500 16.500c0 6 4 9 9.500 9 2.500 0 4.500-.6 6-1.800M25.500 16.500c0 1.800-.3 3.200-1 4.500M16 26v5.500M1 1l30 30" />
  </svg>
);
const cs = "h-8 w-8";
const controls: ReactNode[] = [
  <svg viewBox="0 0 32 32" className={cs}>
    <path d="M4.500 4.500H17a5 5 0 0 1 5 5V22zM22.500 12l7.800-5.500c.8-.5 1.500-.2 1.500.7v18.500l-9.300-8zM2.500 6 20.500 27c-.9.800-2 1-3.500 1H5a5 5 0 0 1-5-5V9.500C0 8 1 6.500 2.500 6z" fill="#fff" />
    <path d="M1 .8 31 31.500" stroke="#fff" strokeWidth="2" strokeLinecap="round" />
  </svg>,
  <MicOff className={cs} />,
  <svg viewBox="0 0 32 32" className={cs} fill="none" stroke="#8a8a8a" strokeWidth="1.800" strokeLinecap="round">
    <rect x="1" y="5" width="30" height="22.500" rx="3" /><path d="M16 23V10M11 14.500 16 9.500l5 5" />
  </svg>,
  <svg viewBox="0 0 32 32" className={cs} fill="#fff"><circle cx="6.500" cy="16" r="3.500" /><circle cx="16" cy="16" r="3.500" /><circle cx="25.500" cy="16" r="3.500" /></svg>,
  <svg viewBox="0 0 32 32" className={cs} fill="none" stroke="#fff" strokeWidth="1.700" strokeLinejoin="round" strokeLinecap="round">
    <path d="M8 15.500V5.500a2 2 0 0 1 4 0V15V3a2 2 0 0 1 4 0v12V4a2 2 0 0 1 4 0v12V7.500a1.900 1.900 0 0 1 3.800 0v10.500c1.600-1.600 3.500-2 5-1.200.9.500.7 1.400 0 2-2 1.600-3 3.300-4.600 6.200-1.800 3.500-3.700 6-8.200 6-5.500 0-12-1-12-10V9.500a2 2 0 0 1 4 0" />
  </svg>,
  <svg viewBox="0 0 32 32" className={cs} fill="none" stroke="#fff" strokeWidth="1.800" strokeLinejoin="round" strokeLinecap="round">
    <path d="M1.500 30.500 3 23a14.500 14.500 0 1 1 6 6zM11.500 13h10M11.500 19h6" />
  </svg>,
  <svg viewBox="0 0 32 32" className={cs} fill="none" stroke="#fff" strokeWidth="1.800">
    <circle cx="11.500" cy="7" r="6" /><circle cx="25" cy="8.500" r="4.200" />
    <path d="M4 17h15a3 3 0 0 1 3 3v1.500c0 5-4.500 8-10.500 8S1 26.500 1 21.500V20a3 3 0 0 1 3-3zM25 17h3.500a2.500 2.500 0 0 1 2.500 2.500c0 5-3 7.500-7.500 7.300" />
  </svg>,
];

function CallBar() {
  return (
    <div className="absolute top-[702px] left-[351px] flex h-[78px] w-[1026px] overflow-hidden rounded-md shadow-[0_8px_22px_rgba(0,0,0,.45)]">
      <div className="flex bg-[rgb(54,54,54,.935)]">
        <div className="flex w-[133px] items-center border-r border-[#1c1c1c] pb-[2px] pl-[24px] text-[20px] font-bold text-[#9b9b9b]">
          <Fit w={84}>01:48:40</Fit>
        </div>
        {controls.slice(0, 4).map((c, i) => (
          <span key={i} className="flex w-[78px] items-center justify-center">{c}</span>
        ))}
      </div>
      <div className="flex flex-1 bg-[rgb(41,41,41,.91)]">
        {controls.slice(4).map((c, i) => (
          <span key={i} className="flex w-[78px] items-center justify-center">{c}</span>
        ))}
        <div className="flex flex-1 items-center border-l border-[#1c1c1c] pl-[25px]">
          <div className="flex h-12 w-[218px] items-center justify-center rounded-md border border-[#4c4c4c] bg-[#202020] pb-[2px] text-[20px] font-bold text-white">
            <Fit w={159}>Request control</Fit>
          </div>
        </div>
      </div>
      <div className="flex w-[78px] items-center justify-center bg-[#a8003f]">
        <svg viewBox="0 0 32 14" className="h-[14px] w-8" fill="#fff"><path d="M0 9C0 3 7 0 16 0s16 3 16 9v2.500c0 1.500-.8 2.500-2.300 2.300l-5.500-.8c-1.300-.2-2-1-2-2.200V7.500C19 5.800 13 5.800 9.800 7.500v3.300c0 1.200-.7 2-2 2.200l-5.500.8C.8 14 0 13 0 11.500z" /></svg>
      </div>
    </div>
  );
}

/* ---------- participants ---------- */
function Tile({ name, w, slot, className, children }: { name: string; w: number; slot?: number; className: string; children: ReactNode }) {
  return (
    <div className={`flex h-full w-[270px] shrink-0 flex-col items-center pt-[38px] ${className}`}>
      <div className="flex h-[66px] items-center justify-center">{children}</div>
      <div className="mt-[11px] flex w-full items-center pl-[23px] text-[18px] leading-[22px] text-white [text-shadow:1px_1px_3px_rgba(0,0,0,.7)]">
        <div style={{ width: slot }}>
          <Fit w={w}>{name}</Fit>
        </div>
        {slot && <MicOff className="h-[21px] w-[21px]" />}
      </div>
    </div>
  );
}

const avatar = "flex items-center justify-center rounded-full font-['Open_Sans'] text-[25px] font-semibold";

function Participants() {
  return (
    <div className="flex h-[140px] shrink-0 overflow-hidden bg-[#1b1b1b]">
      <div className="flex w-[651px] shrink-0 items-center pl-[431px]">
        <span className={`${avatar} h-[63px] w-[63px] bg-[#f9ecce] text-[#835b00]`}>AP</span>
        <span className={`${avatar} ml-[63px] h-[63px] w-[63px] bg-[#f6d1cd] text-[#750b1c]`}>AL</span>
      </div>
      <Tile name="Giulia Antonia State" w={157} slot={169} className="bg-[#3c3c3c]">
        <span className={`${avatar} h-[66px] w-[66px] bg-[#c6d1e8] text-[#03094f]`}>GS</span>
      </Tile>
      <Tile name="Gheorghe Laurentiu…" w={177} slot={193} className="bg-[#38353b]">
        <span className={`${avatar} h-[66px] w-[66px] bg-[#fee9d3] text-[#8e5620]`}>GG</span>
      </Tile>
      <Tile name="Florin Petrisor Tanasa" w={174} slot={185} className="bg-[#333333]">
        <span className="flex h-[65px] w-[65px] items-center justify-center rounded-full border-2 border-[#1b1b1b] bg-[#424242] font-['Open_Sans'] text-[9px] font-bold text-[#e8e8e8]">+12</span>
      </Tile>
      <Tile name="CARMEN ELENA CHIRITA" w={216} className="bg-[radial-gradient(circle_at_50%_50%,#5c4f86_0%,#554a78_25%,#453c5c_48%,#3a3445_75%)]">
        <span className="flex h-20 w-20 shrink-0 items-center justify-center rounded-full border-4 border-[#a68bfb] bg-[#39334a] shadow-lg">
          <span className={`${avatar} h-[66px] w-[66px] bg-[#cddadf] text-[#063a3c]`}>CC</span>
        </span>
      </Tile>
    </div>
  );
}

export default function App() {
  return (
    <div className="flex h-[1080px] w-[1920px] flex-col overflow-hidden bg-black font-['Liberation_Sans',sans-serif]">
      <SystemBar />
      <div className="flex min-h-0 flex-1">
        <Dock />
        <div className="flex min-w-0 flex-1 flex-col">
          <TitleBar />
          <div className="flex min-h-0 flex-1">
            <Rail />
            <main className="flex min-w-0 flex-1 flex-col">
              <div className="relative flex min-h-0 flex-1 bg-black pl-[124px]">
                <SharedScreen />
                <CallBar />
                <div className="absolute top-[784px] left-[48px] text-[18px] leading-[22px] text-white [text-shadow:1px_2px_3px_rgba(0,0,0,.8)]">
                  <Fit w={216}>CARMEN ELENA CHIRITA</Fit>
                </div>
              </div>
              <Participants />
            </main>
          </div>
        </div>
      </div>
    </div>
  );
}
